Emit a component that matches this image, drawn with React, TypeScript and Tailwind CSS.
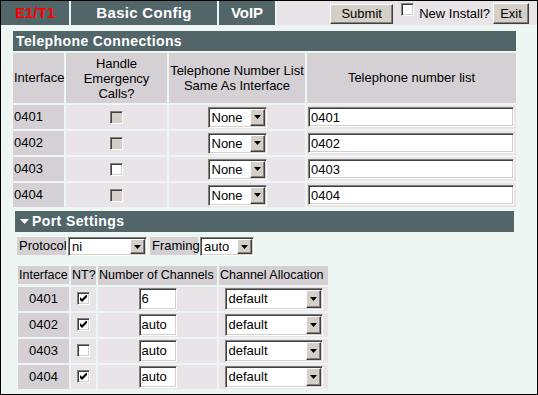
import React from 'react';

const sunken =
  'border border-t-[#808080] border-l-[#808080] border-b-white border-r-white shadow-[inset_1px_1px_0_#404040,inset_-1px_-1px_0_#d4d0c8]';
const raised =
  'border border-t-white border-l-white border-b-[#404040] border-r-[#404040] shadow-[inset_-1px_-1px_0_#808080] bg-[#d4d0c8]';

const Check = ({ checked = false, disabled = false }: { checked?: boolean; disabled?: boolean }) => (
  <div
    className={`w-[13px] h-[13px] ${sunken} ${disabled ? 'bg-[#d4d0c8]' : 'bg-white'} flex items-center justify-center`}
  >
    {checked && (
      <svg width="7" height="7" viewBox="0 0 7 7">
        <path d="M0 2 L2 4 L6 0 L7 0 L7 2 L2 7 L0 5 Z" fill="#000" />
      </svg>
    )}
  </div>
);

const Select = ({ value, className }: { value: string; className: string }) => (
  <div className={`${className} ${sunken} bg-white flex p-[1px]`}>
    <span className="flex-1 pl-[2px] self-center leading-none">{value}</span>
    <span className={`w-[15px] ${raised} flex items-center justify-center`}>
      <svg width="7" height="4" viewBox="0 0 7 4">
        <path d="M0 0H7L3.5 4Z" fill="#000" />
      </svg>
    </span>
  </div>
);

const TextBox = ({ value, className }: { value: string; className: string }) => (
  <div className={`${className} ${sunken} bg-white flex items-center pl-[2px] leading-none`}>{value}</div>
);

const phones = [
  { id: '0401', white: false },
  { id: '0402', white: false },
  { id: '0403', white: true },
  { id: '0404', white: false },
];

const ports = [
  { id: '0401', nt: true, channels: '6' },
  { id: '0402', nt: true, channels: 'auto' },
  { id: '0403', nt: false, channels: 'auto' },
  { id: '0404', nt: true, channels: 'auto' },
];

export default function App() {
  return (
    <div className="w-[538px] h-[395px] border border-black bg-[#eef6f4] font-['Liberation_Sans',Arial,sans-serif] text-[13px] text-black overflow-hidden whitespace-nowrap">
      {/* top bar */}
      <div className="flex h-[24px] gap-[2px]">
        <div className="w-[68px] bg-[#52666a] flex items-center justify-center text-[#ff0000] font-bold text-[15px]">
          E1/T1
        </div>
        <div className="w-[146px] bg-[#52666a] flex items-center justify-center text-white font-bold text-[15px] tracking-[0.3px]">
          Basic Config
        </div>
        <div className="w-[56px] bg-[#52666a] flex items-center justify-center text-white font-bold text-[15px]">
          VoIP
        </div>
        <div className="flex-1 bg-[#e8e4e8] flex items-start justify-end pr-[8px]">
          <div className={`mt-[3px] w-[63px] h-[20px] ${raised} flex items-center justify-center`}>Submit</div>
          <div className="ml-[8px] mt-[2px]">
            <Check />
          </div>
          <span className="ml-[5px] mt-[5px] leading-[16px]">New Install?</span>
          <div className={`ml-[3px] mt-[2px] w-[36px] h-[21px] ${raised} flex items-center justify-center`}>Exit</div>
        </div>
      </div>

      {/* telephone connections */}
      <div className="ml-[12px] mt-[6px] w-[503px] grid grid-cols-[51px_101px_136px_209px] gap-[2px]">
        <div className="col-span-4 h-[20px] bg-[#52666a] text-white font-bold text-[14px] tracking-[0.4px] pl-[3px] flex items-center">
          Telephone Connections
        </div>
        <div className="h-[50px] bg-[#d4d0d4] flex items-center pl-[1px]">Interface</div>
        <div className="bg-[#d4d0d4] flex items-center justify-center text-center leading-[15px]">
          Handle
          <br />
          Emergency
          <br />
          Calls?
        </div>
        <div className="bg-[#d4d0d4] flex items-center justify-center text-center leading-[15px]">
          Telephone Number List
          <br />
          Same As Interface
        </div>
        <div className="bg-[#d4d0d4] flex items-center justify-center">Telephone number list</div>
        {phones.map((p) => (
          <React.Fragment key={p.id}>
            <div className="h-[24px] bg-[#d4d0d4] flex items-center pl-[1px]">{p.id}</div>
            <div className="bg-[#e8e4e8] flex items-center justify-center">
              <Check disabled={!p.white} />
            </div>
            <div className="bg-[#e8e4e8] flex items-center justify-center">
              <Select value="None" className="w-[59px] h-[21px]" />
            </div>
            <div className="bg-[#e8e4e8] flex items-center">
              <TextBox value={p.id} className="ml-[1px] w-[206px] h-[20px]" />
            </div>
          </React.Fragment>
        ))}

        {/* port settings */}
        <div className="col-span-4 p-[2px]">
          <div className="h-[21px] bg-[#52666a] text-white font-bold text-[14px] tracking-[0.4px] flex items-center pl-[5px]">
            <svg width="9" height="5" viewBox="0 0 9 5" className="mr-[3px]">
              <path d="M0 0H9L4.5 5Z" fill="#fff" />
            </svg>
            Port Settings
          </div>
          <div className="mt-[5px] ml-[2px] flex items-start">
            <div className="w-[49px] h-[18px] bg-[#d4d0d4] flex items-center pl-[2px]">Protocol</div>
            <Select value="ni" className="ml-[2px] w-[79px] h-[19px]" />
            <div className="ml-[3px] w-[48px] h-[18px] bg-[#d4d0d4] flex items-center pl-[2px]">Framing</div>
            <Select value="auto" className="ml-[2px] w-[54px] h-[19px]" />
          </div>
          <div className="mt-[10px] ml-[3px] grid grid-cols-[51px_25px_119px_109px] gap-[2px] w-max">
            <div className="h-[18px] bg-[#d4d0d4] flex items-center pl-[1px] text-[12.5px]">Interface</div>
            <div className="bg-[#d4d0d4] flex items-center pl-[1px] text-[12.5px]">NT?</div>
            <div className="bg-[#d4d0d4] flex items-center pl-[1px] text-[12.5px]">Number of Channels</div>
            <div className="bg-[#d4d0d4] flex items-center pl-[1px] text-[12.5px]">Channel Allocation</div>
            {ports.map((p) => (
              <React.Fragment key={p.id}>
                <div className="h-[24px] bg-[#d4d0d4] flex items-center justify-center">{p.id}</div>
                <div className="bg-[#e8e4e8] flex items-center justify-center">
                  <Check checked={p.nt} />
                </div>
                <div className="bg-[#e8e4e8] flex items-center justify-center">
                  <TextBox value={p.channels} className="w-[38px] h-[22px]" />
                </div>
                <div className="bg-[#e8e4e8] flex items-center justify-center">
                  <Select value="default" className="w-[98px] h-[22px]" />
                </div>
              </React.Fragment>
            ))}
          </div>
        </div>
      </div>
    </div>
  );
}
